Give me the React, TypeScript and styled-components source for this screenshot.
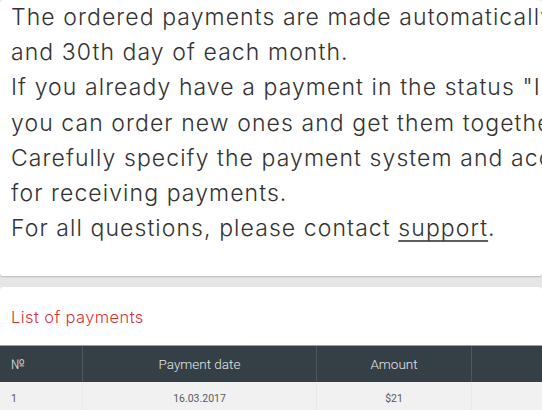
import React from 'react';
import styled, { createGlobalStyle } from 'styled-components';

const GlobalStyle = createGlobalStyle`
  html, body {
    margin: 0;
    padding: 0;
    background: #e6e6e6;
    overflow: hidden;
  }
  #root {
    width: 542px;
    height: 410px;
    overflow: hidden;
  }
`;

const Page = styled.div`
  display: flex;
  flex-direction: column;
  gap: 11px;
  width: 542px;
`;

const Card = styled.div`
  background: #fff;
  border-radius: 3px;
  box-shadow: 0 1px 2px rgba(0, 0, 0, 0.2);
  overflow: hidden;
`;

const Notice = styled.div`
  padding: 0 11px 30px;
  font-family: Inter, 'Noto Sans', sans-serif;
  font-weight: 300;
  font-size: 23px;
  letter-spacing: 1.08px;
  line-height: 35.2px;
  color: #333;
`;

const Line = styled.div`
  white-space: nowrap;
`;

const SupportLink = styled.a`
  color: #333;
  text-decoration: underline;
  text-decoration-color: #5e5e5e;
  text-decoration-thickness: 2px;
  text-underline-offset: 4px;
`;

const Title = styled.div`
  padding: 20px 11px 17px;
  font-family: Inter, 'Noto Sans', sans-serif;
  font-weight: 300;
  font-size: 16.5px;
  letter-spacing: 0.4px;
  line-height: 21px;
  color: #dc3238;
  border-bottom: 1px solid #9a9ea1;
`;

const Table = styled.div`
  display: grid;
  grid-template-columns: 82px 234px 155px 120px;
  width: 591px;
  font-family: Roboto, 'Noto Sans', sans-serif;
`;

const HeadCell = styled.div<{ $left?: boolean }>`
  background: #353f46;
  color: #e4e7e9;
  font-size: 13.5px;
  font-weight: 300;
  height: 36px;
  display: flex;
  align-items: center;
  justify-content: ${(p) => (p.$left ? 'flex-start' : 'center')};
  padding: 0 11px;
  border-left: 1px solid #4d575e;
  &:first-child {
    border-left: none;
  }
`;

const Cell = styled.div<{ $left?: boolean }>`
  background: #f1f1f1;
  color: #5a5a5a;
  font-size: 10.5px;
  height: 32px;
  display: flex;
  align-items: center;
  justify-content: ${(p) => (p.$left ? 'flex-start' : 'center')};
  padding: 0 11px;
  border-left: 1px solid #e9e9e9;
  &:nth-child(4n + 1) {
    border-left: none;
  }
`;

const payments = [{ id: 1, date: '16.03.2017', amount: '$21' }];

export default function App() {
  return (
    <>
      <GlobalStyle />
      <Page>
        <Card>
          <Notice>
            <Line>The ordered payments are made automatically on the 15th</Line>
            <Line>and 30th day of each month.</Line>
            <Line>If you already have a payment in the status "In progress",</Line>
            <Line>you can order new ones and get them together.</Line>
            <Line>Carefully specify the payment system and account details</Line>
            <Line>for receiving payments.</Line>
            <Line>
              For all questions, please contact <SupportLink href="#">support</SupportLink>.
            </Line>
          </Notice>
        </Card>
        <Card>
          <Title>List of payments</Title>
          <Table>
            <HeadCell $left>№</HeadCell>
            <HeadCell>Payment date</HeadCell>
            <HeadCell>Amount</HeadCell>
            <HeadCell />
            {payments.map((p) => (
              <React.Fragment key={p.id}>
                <Cell $left>{p.id}</Cell>
                <Cell>{p.date}</Cell>
                <Cell>{p.amount}</Cell>
                <Cell />
              </React.Fragment>
            ))}
          </Table>
        </Card>
      </Page>
    </>
  );
}
